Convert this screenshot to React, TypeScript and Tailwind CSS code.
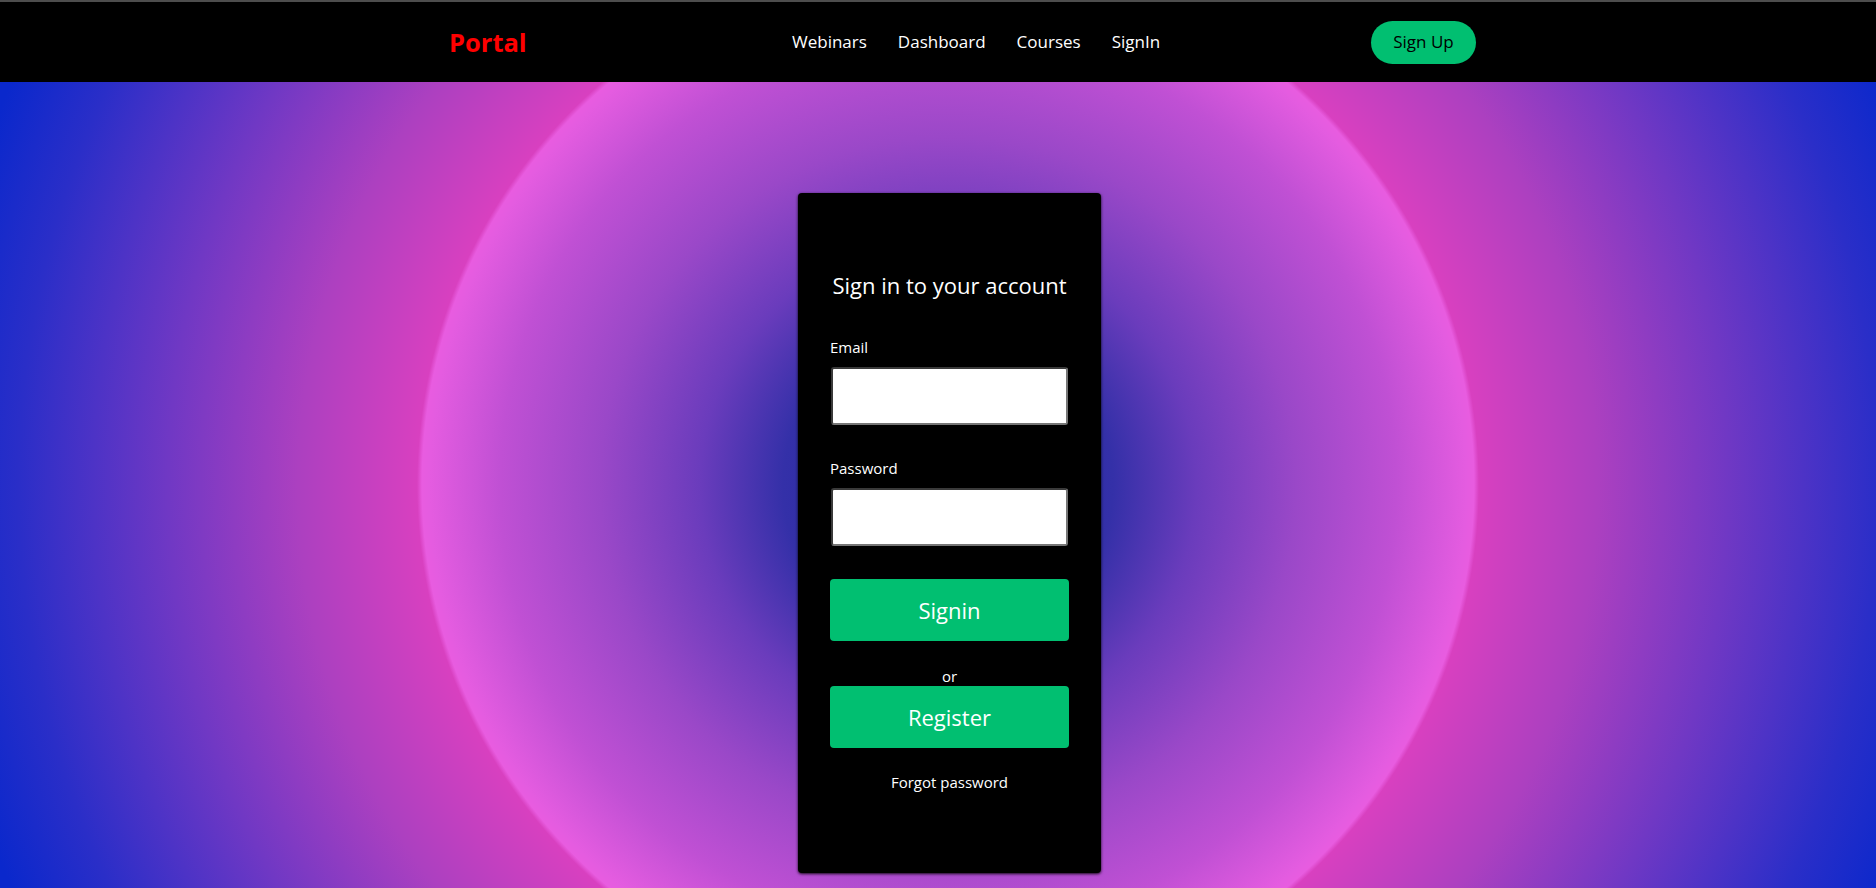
import React from "react";

export default function App() {
  return (
    <div className="flex h-screen w-full flex-col overflow-hidden font-['Open_Sans','Noto_Sans',sans-serif]">
      <header className="flex h-[82px] shrink-0 items-center border-t-2 border-[#4d4d4d] bg-black pl-[449px] pr-[400px]">
        <div className="w-[343px] pt-[3px]">
          <a className="text-[25.5px] font-bold leading-none text-[#ff0000]">Portal</a>
        </div>
        <nav className="flex items-center gap-[31px] text-[17px] text-white">
          <a>Webinars</a>
          <a>Dashboard</a>
          <a>Courses</a>
          <a>SignIn</a>
        </nav>
        <button className="ml-auto flex h-[43px] w-[105px] items-center justify-center rounded-full bg-[#01bf71] text-[17px] text-black">
          Sign Up
        </button>
      </header>
      <main className="flex flex-1 justify-center bg-[radial-gradient(circle_at_948px_403px,#1a22a0_0px,#3430a8_165px,#6a3cbc_248px,#9a48c8_348px,#c050d4_448px,#e45ce0_518px,#e85ce0_526px,#d840c0_531px,#ac40c0_650px,#7038c4_780px,#2a2ec8_930px,#0a28cc_1020px)] pl-[23px] pt-[111px]">
        <form className="flex h-[680px] w-[303px] flex-col rounded-[4px] bg-black px-[32px] pt-[78px] shadow-[0_1px_3px_rgba(0,0,0,0.9)]">
          <h1 className="text-center text-[22px] font-normal leading-[28px] text-white">
            Sign in to your account
          </h1>
          <label className="mt-[38px] text-[15px] leading-[20px] text-white">Email</label>
          <input
            type="email"
            className="mx-px mt-[10px] h-[58px] rounded-[3px] border-2 border-b-[#767676] border-l-[#3a3a3a] border-r-[#767676] border-t-[#3a3a3a] bg-white px-4 outline-none"
          />
          <label className="mt-[33px] text-[15px] leading-[20px] text-white">Password</label>
          <input
            type="password"
            className="mx-px mt-[10px] h-[58px] rounded-[3px] border-2 border-b-[#767676] border-l-[#3a3a3a] border-r-[#767676] border-t-[#3a3a3a] bg-white px-4 outline-none"
          />
          <button
            type="button"
            className="mt-[33px] flex h-[62px] items-center justify-center rounded-[4px] bg-[#01bf71] text-[22px] text-white"
          >
            Signin
          </button>
          <span className="mt-[25px] text-center text-[15px] leading-[20px] text-white">or</span>
          <button
            type="button"
            className="flex h-[62px] items-center justify-center rounded-[4px] bg-[#01bf71] text-[22px] text-white"
          >
            Register
          </button>
          <span className="mt-[24px] text-center text-[15px] leading-[20px] text-white">
            Forgot password
          </span>
        </form>
      </main>
    </div>
  );
}
